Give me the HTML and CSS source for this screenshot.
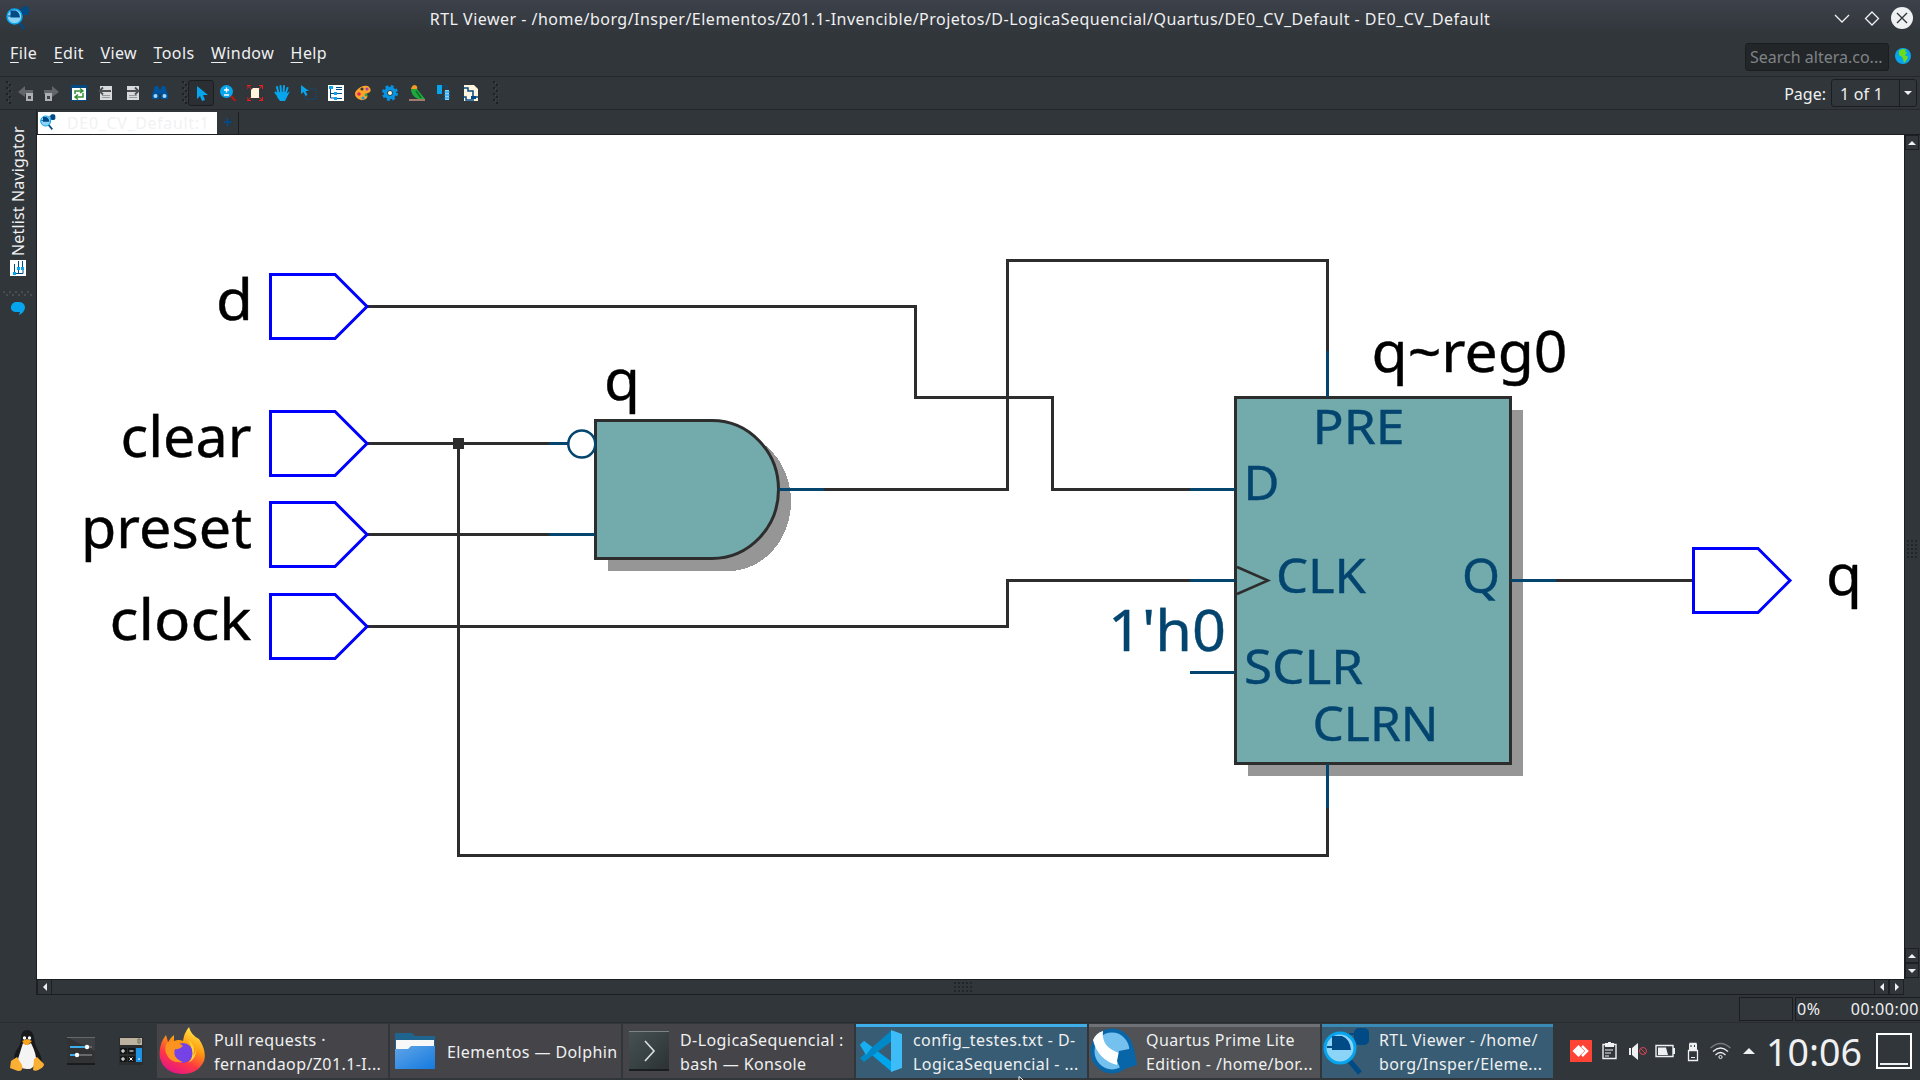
FILE: index.html
```html
<!DOCTYPE html>
<html lang="en">
<head>
<meta charset="utf-8">
<title>RTL Viewer</title>
<link rel="stylesheet" href="styles.css">
</head>
<body>
<svg class="defs" width="0" height="0">
  <symbol id="rtl" viewBox="0 0 48 48">
    <rect x="31" y="1" width="15" height="17" rx="5" fill="#004a86"/>
    <path d="M26 7h7" stroke="#004a86" stroke-width="2"/>
    <path d="M25 32l12 14" stroke="#004a86" stroke-width="5"/>
    <circle cx="17" cy="21" r="15" fill="#8bd3f7" stroke="#06a5ee" stroke-width="3"/>
    <path d="M9 9h10q8 3 9 14H9V21H4v-2h5z" fill="#004a86"/>
  </symbol>
  <symbol id="grip" viewBox="0 0 6 24">
    <path d="M0 1h2M3 4h2M0 7h2M3 10h2M0 13h2M3 16h2M0 19h2M3 22h2" stroke="#1d2124" stroke-width="2"/>
    <path d="M2 2h1M5 5h1M2 8h1M5 11h1M2 14h1M5 17h1M2 20h1" stroke="#4a5056" stroke-width="1"/>
  </symbol>
  <symbol id="port" viewBox="-2 -2 101 69" overflow="visible">
    <path d="M0 0H64.500L96.500 32L64.500 64H0Z" fill="none" stroke="#00f" stroke-width="3"/>
  </symbol>
</svg>

<header class="titlebar">
  <svg class="app-icon" viewBox="0 0 48 48"><use href="#rtl"/></svg>
  <span class="title">RTL Viewer - /home/borg/Insper/Elementos/Z01.1-Invencible/Projetos/D-LogicaSequencial/Quartus/DE0_CV_Default - DE0_CV_Default</span>
  <svg class="win-buttons" width="80" height="24" viewBox="0 0 80 24">
    <path d="M1 9l7 7 7-7M38 6l6.500 6.500-6.500 6.500-6.500-6.500z" fill="none" stroke="#eff0f1" stroke-width="1.300"/>
    <circle cx="68" cy="12" r="11" fill="#eff0f1"/><path d="M63 7l10 10M73 7l-10 10" stroke="#31363b" stroke-width="1.400"/>
  </svg>
</header>

<nav class="menubar">
  <span><u>F</u>ile</span><span><u>E</u>dit</span><span><u>V</u>iew</span><span><u>T</u>ools</span><span><u>W</u>indow</span><span><u>H</u>elp</span>
  <div class="search">Search altera.co...</div>
  <svg class="globe" width="16" height="16" viewBox="0 0 16 16"><circle cx="8" cy="8" r="8" fill="#06a5ee"/><path d="M4 3l3-2 4 .5-1 2 2 1-2 3 3 1-1 3-3 3.500-1-4-1-2-3-2z" fill="#6bdc1c"/></svg>
</nav>

<div class="toolbar">
  <svg class="grip first" viewBox="0 0 6 24"><use href="#grip"/></svg>
  <svg class="ic back" viewBox="0 0 16 16"><path d="M0 7l7-6v4h8v4H7v3z" fill="#63676b"/><path d="M8 8h7v8H8z" fill="#adb1b5"/><path d="M10 11h3v3h-3z" fill="#444"/></svg>
  <svg class="ic fwd" viewBox="0 0 16 16"><path d="M16 7L9 1v4H1v4h8v3z" fill="#63676b"/><path d="M2 8h7v8H2z" fill="#adb1b5"/><path d="M4 11h3v3H4z" fill="#444"/></svg>
  <svg class="ic" viewBox="0 0 16 16"><path d="M0 0h16v16H0z" fill="#004a86"/><path d="M1 3h14v12H1z" fill="#fff"/><path d="M4 9V6h7M9 3.500L12 6 9 8M12 8v4H5M7 9.500L4 12l3 2.500" stroke="#358f35" stroke-width="1.500" fill="none"/></svg>
  <svg class="ic" viewBox="0 0 16 16"><path d="M2 1h12v14H2z" fill="#d8dbdd"/><path d="M4 10.500h8M4 12.500h8" stroke="#999"/><path d="M1 6h12M5 2.500L1.500 6 5 9.500" stroke="#4b4f52" stroke-width="1.800" fill="none"/></svg>
  <svg class="ic" viewBox="0 0 16 16"><path d="M2 1h12v14H2z" fill="#d8dbdd"/><path d="M4 10.500h8M4 12.500h8" stroke="#999"/><path d="M2 6h12M10 2.500L13.500 6 10 9.500" stroke="#4b4f52" stroke-width="1.800" fill="none"/></svg>
  <svg class="ic" viewBox="0 0 16 16"><path d="M2 4l1-3h3l1 3h2l1-3h3l1 3 2 6v4H9V9H7v5H0v-4z" fill="#00529b"/><circle cx="3.500" cy="11" r="2" fill="#9edcff"/><circle cx="12.500" cy="11" r="2" fill="#9edcff"/></svg>
  <svg class="grip mid" viewBox="0 0 6 24"><use href="#grip"/></svg>
  <span class="pressed"><svg class="ic" viewBox="0 0 16 16"><path d="M4 1v13l3-3 2 5 3-1-2-5h5z" fill="#06a5ee"/></svg></span>
  <svg class="ic" viewBox="0 0 16 16"><path d="M10 10l5.500 6" stroke="#b01818" stroke-width="2.500"/><circle cx="6.500" cy="6.500" r="6.500" fill="#06a5ee"/><path d="M4 5h5M6.500 2.500v5M4 10h5" stroke="#fff" stroke-width="1.300"/></svg>
  <svg class="ic" viewBox="0 0 16 16"><path d="M6 3h6v10H4V5z" fill="#fff4dc"/><path d="M0 0l4 4M0 4V.5h4M16 0l-4 4M12 .5h3.500V4M0 16l4-4M0 12v3.500h4M16 16l-4-4M12 15.500h3.500V12" stroke="#f21b1b" fill="none"/></svg>
  <svg class="ic" viewBox="0 0 16 16"><path d="M4.500 9L3 2M7 8L6.500 1M9.500 8l.5-7M11.500 9l2-6M6 13L1.500 7.500" stroke="#06a5ee" stroke-width="2" stroke-linecap="round"/><path d="M4 7l8 0 1.500 1L16 6l-3 6-2 4H6l-3-4z" fill="#06a5ee"/></svg>
  <svg class="ic" viewBox="0 0 16 16"><path d="M0 0v9l2.500-2 2 4 2-1-2-4H8z" fill="#06a5ee"/><path d="M8 4h7v10H4v-3" fill="none" stroke="#00529b" stroke-dasharray="1 1"/></svg>
  <svg class="ic" viewBox="0 0 16 16"><path d="M0 0h16v16H0z" fill="#fff"/><path d="M2.500 4v9H8M3 8.500h4M8 2.500h6M9 8.500h5M9 13.500h5M8 4.500h6" stroke="#004a86" fill="none"/><path d="M1 1h4v3H1zM6 7h3v3H6zM6 12h3v3H6z" fill="#06a5ee"/></svg>
  <svg class="ic" viewBox="0 0 16 16"><path d="M1 6q5-6 12-5 4 3 2 6l-4 2q3 2 0 5-6 3-10-2-2-3 0-6" fill="#fda428"/><circle cx="4" cy="9" r="1.800" fill="#e02060"/><circle cx="8" cy="13" r="1.600" fill="#15a0e8"/><circle cx="7" cy="4" r="1.600" fill="#31363b"/><circle cx="12" cy="4" r="1.500" fill="#a43cc0"/><circle cx="11" cy="10" r="1.400" fill="#24a848"/></svg>
  <svg class="ic" viewBox="0 0 16 16"><circle cx="8" cy="8" r="6.500" fill="none" stroke="#0693e3" stroke-width="3" stroke-dasharray="2.800 2.300"/><circle cx="8" cy="8" r="4.500" fill="none" stroke="#0693e3" stroke-width="3.500"/><circle cx="8" cy="8" r="2" fill="#fff2d0"/></svg>
  <svg class="ic" viewBox="0 0 16 16"><path d="M0 14h16v2H0z" fill="#a27a70"/><path d="M2 4q3-2 6 0l8 10H9Q2 11 2 4" fill="#1fa83b"/><path d="M2 4q1-4 4-4 3 1 2 4z" fill="#f79a22"/><path d="M7 6l5 7" stroke="#087024" stroke-width="1.500"/></svg>
  <svg class="ic" viewBox="0 0 16 16"><path d="M1 0h5v9H1z" fill="#06a5ee"/><path d="M9 5h4v10H9z" fill="#8bd3f7"/><path d="M8 7h6M8 10h6M8 13h6" stroke="#0693e3"/><path d="M6 1h5v3M2 10l2 4h4" stroke="#004a86" fill="none"/></svg>
  <svg class="ic" viewBox="0 0 16 16"><path d="M1 0h10l4 4v12H1z" fill="#fff4dc"/><path d="M0 3h5v3h5v6h5M0 12h3v3h8" stroke="#004a86" fill="none" stroke-width="1.500"/><path d="M8 11h5v3H8z" fill="#004a86"/></svg>
  <svg class="grip last" viewBox="0 0 6 24"><use href="#grip"/></svg>
  <span class="page-label">Page:</span>
  <div class="combo"><span class="combo-value">1 of 1</span><span class="combo-arrow"><i class="tri down"></i></span></div>
</div>

<main class="work">
  <aside class="dock">
    <span class="dock-label">Netlist Navigator</span>
    <svg width="16" height="16" viewBox="0 0 16 16"><path d="M0 0h16v16H0z" fill="#fff"/><path d="M4.500 12V4M4 13.500h9V10M8.500 13V9M8.500 7V1M12.500 7V1" stroke="#004a86" fill="none"/><path d="M3 12h3v3H3zM7 7h3v3H7zM11 7h3v3h-3z" fill="#06a5ee"/></svg>
    <svg class="dock-grip" width="30" height="6" viewBox="0 0 30 6"><path d="M0 1h2M6 1h2M12 1h2M18 1h2M24 1h2M3 4h2M9 4h2M15 4h2M21 4h2M27 4h2" stroke="#474c51" stroke-width="2"/></svg>
    <svg width="16" height="14" viewBox="0 0 16 14"><path d="M5 0h5q5 1 5 6-1 5-6 7l1-3H5Q0 9 1 4q1-3 4-4" fill="#06a5ee"/></svg>
  </aside>
  <section class="doc">
    <div class="tabs">
      <div class="tab"><svg width="16" height="16" viewBox="0 0 48 48"><use href="#rtl"/></svg><span>DE0_CV_Default:1</span></div>
      <div class="tab-add">+</div>
    </div>
    <div class="view">
      <svg class="schematic" width="1867" height="844" viewBox="37 135 1867 844">
        <g fill="#969696" shape-rendering="crispEdges">
          <path d="M608 432H728.500A62.500 69.500 0 0 1 728.500 571H608Z"/>
          <rect x="1248" y="410" width="275" height="366"/>
        </g>
        <g fill="none" stroke="#2e2d2d" stroke-width="3" shape-rendering="crispEdges">
          <path d="M367 306.500H915.500V397.500H1052.500V489.500H1192"/>
          <path d="M367 443.500H550M458.500 443.500V855.500H1327.500V807"/>
          <path d="M367 534.500H550"/>
          <path d="M367 626.500H1007.500V580.500H1192"/>
          <path d="M822 489.500H1007.500V260.500H1327.500V352M1555 580.500H1693"/>
        </g>
        <rect x="453" y="438" width="11" height="11" fill="#2e2d2d"/>
        <g fill="#73abad" stroke="#2e2d2d" stroke-width="3">
          <path d="M595.500 420.500H712A66.500 69 0 0 1 712 558.500H595.500Z"/>
          <rect x="1235.500" y="397.500" width="275" height="366"/>
          <path d="M1237 567L1268 580.500 1237 594" fill="none" stroke-width="2.500"/>
        </g>
        <g fill="none" stroke="#04456f" stroke-width="3">
          <path d="M549 443.500H568M549 534.500H595M779 489.500H824M1190 489.500H1235M1190 580.500H1235M1190 672.500H1235M1511 580.500H1556M1327.500 351V397M1327.500 764V808"/>
          <circle cx="581.800" cy="444" r="13.500" fill="#fff" stroke-width="2.500"/>
        </g>
        <use href="#port" x="268.500" y="272.500" width="101" height="69"/>
        <use href="#port" x="268.500" y="409.500" width="101" height="69"/>
        <use href="#port" x="268.500" y="500.500" width="101" height="69"/>
        <use href="#port" x="268.500" y="592.500" width="101" height="69"/>
        <use href="#port" x="1691.500" y="546.500" width="101" height="69"/>
        <g class="net">
          <text x="216" y="320" textLength="37" lengthAdjust="spacingAndGlyphs">d</text>
          <text x="120.500" y="457" textLength="131" lengthAdjust="spacingAndGlyphs">clear</text>
          <text x="81" y="548" textLength="171" lengthAdjust="spacingAndGlyphs">preset</text>
          <text x="109.500" y="640" textLength="142" lengthAdjust="spacingAndGlyphs">clock</text>
          <text x="604" y="400" textLength="36" lengthAdjust="spacingAndGlyphs">q</text>
          <text x="1371.500" y="372" textLength="196" lengthAdjust="spacingAndGlyphs">q~reg0</text>
          <text x="1826" y="594.500" textLength="36" lengthAdjust="spacingAndGlyphs">q</text>
          <text class="const" x="1108" y="651" textLength="118" lengthAdjust="spacingAndGlyphs">1'h0</text>
        </g>
        <g class="pin">
          <text x="1312.500" y="443.500" textLength="92" lengthAdjust="spacingAndGlyphs">PRE</text>
          <text x="1243.500" y="500" textLength="36" lengthAdjust="spacingAndGlyphs">D</text>
          <text x="1276" y="592.500" textLength="90" lengthAdjust="spacingAndGlyphs">CLK</text>
          <text x="1462" y="592.500" textLength="38" lengthAdjust="spacingAndGlyphs">Q</text>
          <text x="1244" y="684" textLength="119" lengthAdjust="spacingAndGlyphs">SCLR</text>
          <text x="1312.500" y="741" textLength="126" lengthAdjust="spacingAndGlyphs">CLRN</text>
        </g>
      </svg>
      <div class="vscroll"><span class="sbtn"><i class="tri up"></i></span><span class="thumb"><i class="dots v"></i></span><span class="sbtn"><i class="tri up"></i></span><span class="sbtn"><i class="tri down"></i></span></div>
    </div>
    <div class="hscroll"><span class="sbtn"><i class="tri left"></i></span><span class="thumb"><i class="dots h"></i></span><span class="sbtn"><i class="tri left"></i></span><span class="sbtn"><i class="tri right"></i></span></div>
  </section>
</main>

<footer class="status"><span class="progress"></span><span class="stats"><span>0%</span><span>00:00:00</span></span></footer>

<div class="taskbar">
  <div class="launchers">
    <svg width="36" height="44" viewBox="0 0 36 44"><path d="M12 9q0-8 6-8t7 8q1 8 5 14 6 12-1 15H9Q2 31 7 22q5-6 5-13" fill="#17191b"/><path d="M14 14q4 3 8 0 6 12 5 19-3 8-9 7-8 0-9-10z" fill="#f4f4f4"/><path d="M13 12l5-2 5 2-4 4h-3z" fill="#f8a51c"/><circle cx="15.500" cy="9" r="1.700" fill="#fff"/><circle cx="20.500" cy="9" r="1.700" fill="#fff"/><path d="M2 32l6-4 5 8q2 6-4 6l-8-3zM28 28l2 2 5 5q0 3-4 5-4 3-7 1l1-11z" fill="#fbb034"/></svg>
    <svg width="28" height="28" viewBox="0 0 28 28"><path d="M0 0h28v28H0z" fill="#303234"/><path d="M0 0h28v14z" fill="#3d4042"/><path d="M0 .5h28" stroke="#65696c"/><path d="M0 27h28" stroke="#1a1b1c" stroke-width="2"/><path d="M3 10h16M3 18h6" stroke="#3daee9" stroke-width="2"/><path d="M20 10h5M10 18h15" stroke="#66696b" stroke-width="2"/><circle cx="20" cy="10" r="2.200" fill="#fff"/><circle cx="10" cy="18" r="2.200" fill="#fff"/></svg>
    <svg width="24" height="28" viewBox="0 0 24 28"><path d="M0 0h24v28H0z" fill="#2a2c2e"/><path d="M1 1h22v7H1z" fill="#beb39e"/><path d="M19 2h2v4h-2z" fill="none" stroke="#746d60"/><path d="M1 11h7v6H1zM9 11h7v6H9zM1 19h7v6H1zM9 19h7v6H9z" fill="#151617"/><path d="M17 11h6v14h-6z" fill="#1d93e5"/><path d="M2 14h4M4 12v4M10.500 14h4M2 22h4M4 20v4M10.500 20.500l3 3M13.500 20.500l-3 3M19 22h2" stroke="#fff"/></svg>
  </div>
  <div class="task"><span class="tico"><svg width="47" height="48" viewBox="0 0 47 48"><defs><linearGradient id="ff" x1=".8" y1="0" x2=".3" y2="1"><stop offset="0" stop-color="#fff44f"/><stop offset=".4" stop-color="#ff980e"/><stop offset=".7" stop-color="#ff3647"/><stop offset="1" stop-color="#e31587"/></linearGradient></defs><path d="M30 0q2 8 10 12 8 12 5 22-6 13-22 13Q5 46 1 31-1 18 7 8l2 7q2-4 6-7v6q5-2 9 0Q25 6 30 0" fill="url(#ff)"/><circle cx="24" cy="26" r="10" fill="#7542e5"/><path d="M8 16q6-4 13 1l3 2q-5 4-8 3-3 9 8 13-13 2-17-9-2-5 1-10" fill="#ff9320"/><path d="M29 13q9 6 5 16 4-5 3-12 2 14-8 19 9-8 0-23" fill="#ffd53b"/></svg></span><span class="ttext">Pull requests ·<br>fernandaop/Z01.1-I...</span></div>
  <div class="task"><span class="tico"><svg width="40" height="38" viewBox="0 0 40 38"><defs><linearGradient id="fo" x1="0" y1="0" x2="1" y2="1"><stop offset="0" stop-color="#60a5e7"/><stop offset="1" stop-color="#147adf"/></linearGradient></defs><path d="M0 1h17l3 3h20v20H0z" fill="#1f638f"/><path d="M1 8h38v12H1z" fill="#f8f8f8"/><path d="M0 17h13l3-3h24v23H0z" fill="url(#fo)"/></svg></span><span class="ttext">Elementos — Dolphin</span></div>
  <div class="task"><span class="tico konsole"><svg width="40" height="40" viewBox="0 0 40 40"><defs><linearGradient id="ko" x1="0" y1="0" x2="1" y2="1"><stop offset="0" stop-color="#465254"/><stop offset="1" stop-color="#2c3133"/></linearGradient></defs><path d="M0 0h40v40H0z" fill="url(#ko)"/><path d="M0 .5h40" stroke="#7b8386"/><path d="M0 39h40" stroke="#1a1e20" stroke-width="2"/><path d="M16 10l9 10-9 10" fill="none" stroke="#d8dcdd" stroke-width="1.700"/></svg></span><span class="ttext">D-LogicaSequencial :<br>bash — Konsole</span></div>
  <div class="task active"><span class="tico"><svg width="42" height="42" viewBox="0 0 42 42"><path d="M0 15l4-4 28 21v10z" fill="#00a6ec"/><path d="M0 28l4 4 28-21V0z" fill="#0088c7"/><path d="M0 15l4-4 8 6-6 8z" fill="#19aef0"/><path d="M31 0l11 4v34l-11 4z" fill="#3dbcf8"/></svg></span><span class="ttext">config_testes.txt - D-<br>LogicaSequencial - ...</span></div>
  <div class="task other"><span class="tico"><svg width="48" height="46" viewBox="0 0 48 46"><ellipse cx="22" cy="23" rx="19.500" ry="20.500" fill="#74c0ee" stroke="#0866a8" stroke-width="4"/><path d="M3 12Q6 5 13 3q-2 16 16 22l-2 12Q8 32 3 12" fill="#fff"/><path d="M29 23l15-3 3 17-16 5-4-9z" fill="#0866a8"/></svg></span><span class="ttext">Quartus Prime Lite<br>Edition - /home/bor...</span></div>
  <div class="task active dim"><span class="tico"><svg width="48" height="48" viewBox="0 0 48 48"><use href="#rtl"/></svg></span><span class="ttext">RTL Viewer - /home/<br>borg/Insper/Eleme...</span></div>
  <svg class="tray" width="190" height="28" viewBox="1568 1037 190 28">
    <path d="M1570 1040h22v22h-22z" fill="#ff4435"/><path d="M1572.500 1051l6-6 6 6-6 6z" fill="#fff"/><path d="M1582 1046l5 5-5 5" fill="none" stroke="#fff" stroke-width="2.500"/>
    <path d="M1603 1044.500h13v14h-13z" fill="none" stroke="#eff0f1" stroke-width="1.400"/><path d="M1605 1043h9v4h-9zM1608 1042h3v2h-3z" fill="#eff0f1"/><path d="M1605 1050h8M1605 1053h6M1605 1056h4" stroke="#eff0f1" stroke-width="1.200"/>
    <path d="M1629 1048h2v7h-2zM1632 1048l6-5v17l-6-5z" fill="#eff0f1"/><circle cx="1643" cy="1051" r="3.500" fill="none" stroke="#da4453"/><path d="M1641 1049l5 5" stroke="#da4453"/>
    <path d="M1656 1045.500h17v11h-17z" fill="none" stroke="#eff0f1" stroke-width="1.400"/><path d="M1658 1047.500h8l2 7.500h-10zM1673 1048h2v6h-2z" fill="#eff0f1"/>
    <path d="M1690 1043.500h6v7h-6zM1688.500 1050.500h9v10h-9z" fill="none" stroke="#eff0f1" stroke-width="1.300"/><path d="M1689 1044h8v6h-8z" fill="#eff0f1"/><path d="M1691 1045v2M1694.500 1045v2" stroke="#31363b"/><path d="M1691 1057.500h4" stroke="#eff0f1"/>
    <path d="M1710.500 1048q10-9 20 0" fill="none" stroke="#777b7f" stroke-width="1.300"/><path d="M1713 1051.500q7.500-7 15 0M1715.500 1055q5-5 10 0" fill="none" stroke="#eff0f1" stroke-width="1.300"/><circle cx="1720.500" cy="1057" r="1.600" fill="none" stroke="#eff0f1"/>
    <path d="M1743 1054h12l-6-6z" fill="#eff0f1"/>
  </svg>
  <span class="clock">10:06</span>
  <span class="desktop"></span>
</div>
<svg class="cursor" width="8" height="4" viewBox="0 0 8 4"><path d="M1 4V.5L5 4" fill="#111" stroke="#fff"/></svg>
</body>
</html>
```
FILE: styles.css
```css
* { box-sizing: border-box; }
body {
  margin: 0;
  width: 1920px;
  height: 1080px;
  overflow: hidden;
  display: flex;
  flex-direction: column;
  background: #31363b;
  color: #eff0f1;
  font: 16px/22px "Noto Sans", sans-serif;
  white-space: nowrap;
}
svg { display: block; flex: none; }
.defs { position: absolute; }

.titlebar {
  height: 38px;
  display: grid;
  grid-template-columns: 100px 1fr 100px;
  align-items: center;
  background: linear-gradient(#3d414a, #31363b 90%);
}
.app-icon { width: 24px; height: 24px; margin: -2px 0 0 6px; }
.title { text-align: center; letter-spacing: .485px; }
.win-buttons { margin-left: 14px; margin-top: -2px; }

.menubar {
  height: 38px;
  display: flex;
  align-items: center;
  padding: 0 9px 7px 10px;
}
.menubar > span { margin: -2px 16.5px 0 0; letter-spacing: .4px; }
.menubar u { text-underline-offset: 3px; text-decoration-thickness: 1px; text-decoration-skip-ink: none; }
.search {
  margin: 7px 6px 0 auto;
  width: 144px;
  height: 28px;
  padding: 2px 4px;
  background: #232629;
  border: 1px solid #1b1e20;
  border-radius: 3px;
  color: #7f8386;
}
.globe { margin-top: 5px; }

.toolbar {
  height: 34px;
  display: flex;
  align-items: center;
  border-top: 1px solid #25292c;
  border-bottom: 1px solid #25292c;
}
.ic { width: 16px; height: 16px; margin-right: 11px; }
.ic.back { margin-left: 6px; margin-right: 9px; }
.ic.fwd { margin-right: 12px; }
.grip { width: 6px; height: 24px; }
.grip.first { margin-left: 6px; }
.grip.mid { margin-left: 3px; }
.grip.last { margin-left: 3px; }
.pressed {
  width: 26px;
  height: 26px;
  padding: 4px;
  margin-right: 6px;
  background: #2b2f33;
  border: 1px solid #1b1e20;
  border-radius: 3px;
}
.page-label { margin: 1px 5px 0 auto; }
.combo {
  width: 86px;
  height: 28px;
  margin-right: 3px;
  display: flex;
  border: 1px solid #1b1e20;
  border-radius: 3px;
}
.combo-value { flex: 1; padding: 3px 8px 0; letter-spacing: .2px; }
.combo-arrow { width: 17px; border-left: 1px solid #1b1e20; display: grid; place-items: center; }

.tri { width: 0; height: 0; border: 4px solid transparent; }
.tri.up { border-top: 0; border-bottom-color: #eff0f1; }
.tri.down { border-bottom: 0; border-top-color: #eff0f1; }
.tri.left { border-left: 0; border-right-color: #eff0f1; }
.tri.right { border-right: 0; border-left-color: #eff0f1; }

.work { height: 885px; display: flex; }
.dock { width: 36px; padding-top: 17px; display: flex; flex-direction: column; align-items: center; }
.dock-label { writing-mode: vertical-rl; transform: rotate(180deg); height: 129px; width: 22px; margin-bottom: 4px; letter-spacing: .15px; }
.dock-grip { margin: 15px 0 5px; }
.doc { flex: 1; border-left: 1px solid #1d2023; }
.tabs { height: 25px; display: flex; padding-top: 2px; border-bottom: 1px solid #1b1e20; }
.tab {
  width: 179px;
  height: 22px;
  display: flex;
  align-items: center;
  gap: 11px;
  padding-left: 2px;
  margin-left: 1px;
  background: #fff;
  color: #f1f2f3;
}
.tab span { letter-spacing: .65px; }
.tab svg { margin-top: -3px; }
.tab-add { width: 21px; height: 22px; margin-left: 1px; border-right: 1px solid #1b1e20; text-align: center; line-height: 20px; font-weight: bold; color: #004a86; }
.view { display: flex; height: 844px; background: #fff; }
.net { font: 57px "Noto Sans", sans-serif; fill: #000; stroke: #000; stroke-width: .4px; }
.const, .pin { fill: #04456f; stroke: #04456f; stroke-width: .4px; }
.pin { font: 47.5px "Noto Sans", sans-serif; }

.vscroll { width: 16px; padding-bottom: 1px; display: flex; flex-direction: column; background: #31363b; border-left: 1px solid #1b1e20; }
.hscroll { height: 16px; width: 1867px; display: flex; border-top: 1px solid #1b1e20; border-bottom: 1px solid #1b1e20; }
.sbtn { flex: none; width: 15px; height: 15px; display: grid; place-items: center; border: 1px solid #1d2023; }
.hscroll .sbtn { height: 14px; border-width: 0 1px; }
.vscroll .sbtn { width: 14px; }
.thumb { flex: 1; display: grid; place-items: center; }
.dots { background: radial-gradient(circle at 1px 1px, #22262a 1px, transparent 1.2px) 0 0 / 4px 4px; }
.dots.h { width: 18px; height: 11px; }
.dots.v { width: 11px; height: 18px; }

.status { height: 27px; display: flex; gap: 2px; justify-content: flex-end; align-items: center; }
.progress { width: 54px; height: 24px; border: 1px solid #1b1e20; }
.stats { width: 125px; height: 24px; display: flex; justify-content: space-between; padding: 0 1px; border: 1px solid #1b1e20; border-right: 0; letter-spacing: .6px; }

.taskbar { height: 58px; display: flex; align-items: flex-start; gap: 2px; padding-top: 1px; border-top: 1px solid #2a2e32; }
.launchers { width: 155px; height: 54px; display: flex; align-items: center; gap: 24px; padding-left: 9px; }
.launchers svg:nth-child(2) { margin-left: -2px; }
.task {
  width: 231px;
  height: 54px;
  flex: none;
  display: flex;
  align-items: center;
  background: #454549;
}
.tico { width: 57px; padding-right: 7px; display: grid; place-items: center; }
.tico.konsole { padding-right: 5px; }
.ttext { line-height: 24px; letter-spacing: .42px; padding-top: 1px; }
.task.active { background: #375c73; border-top: 3px solid #3daee9; }
.task.dim { border-top-color: #398ab5; }
.task.other { background: #505255; border-top: 3px solid #6e7175; }
.task.active .tico, .task.other .tico, .task.active .ttext, .task.other .ttext { margin-top: -3px; }
.tray { margin: 13px 0 0 13px; }
.clock { font-size: 37.5px; line-height: 54px; margin-left: 6px; margin-top: 1px; }
.desktop { width: 36px; height: 36px; margin: 9px 0 0 12px; border: 2px solid #fff; background: linear-gradient(#eff0f1, #eff0f1) center 28px / 28px 2px no-repeat; }
.cursor { position: absolute; left: 1018px; top: 1076px; }
```
